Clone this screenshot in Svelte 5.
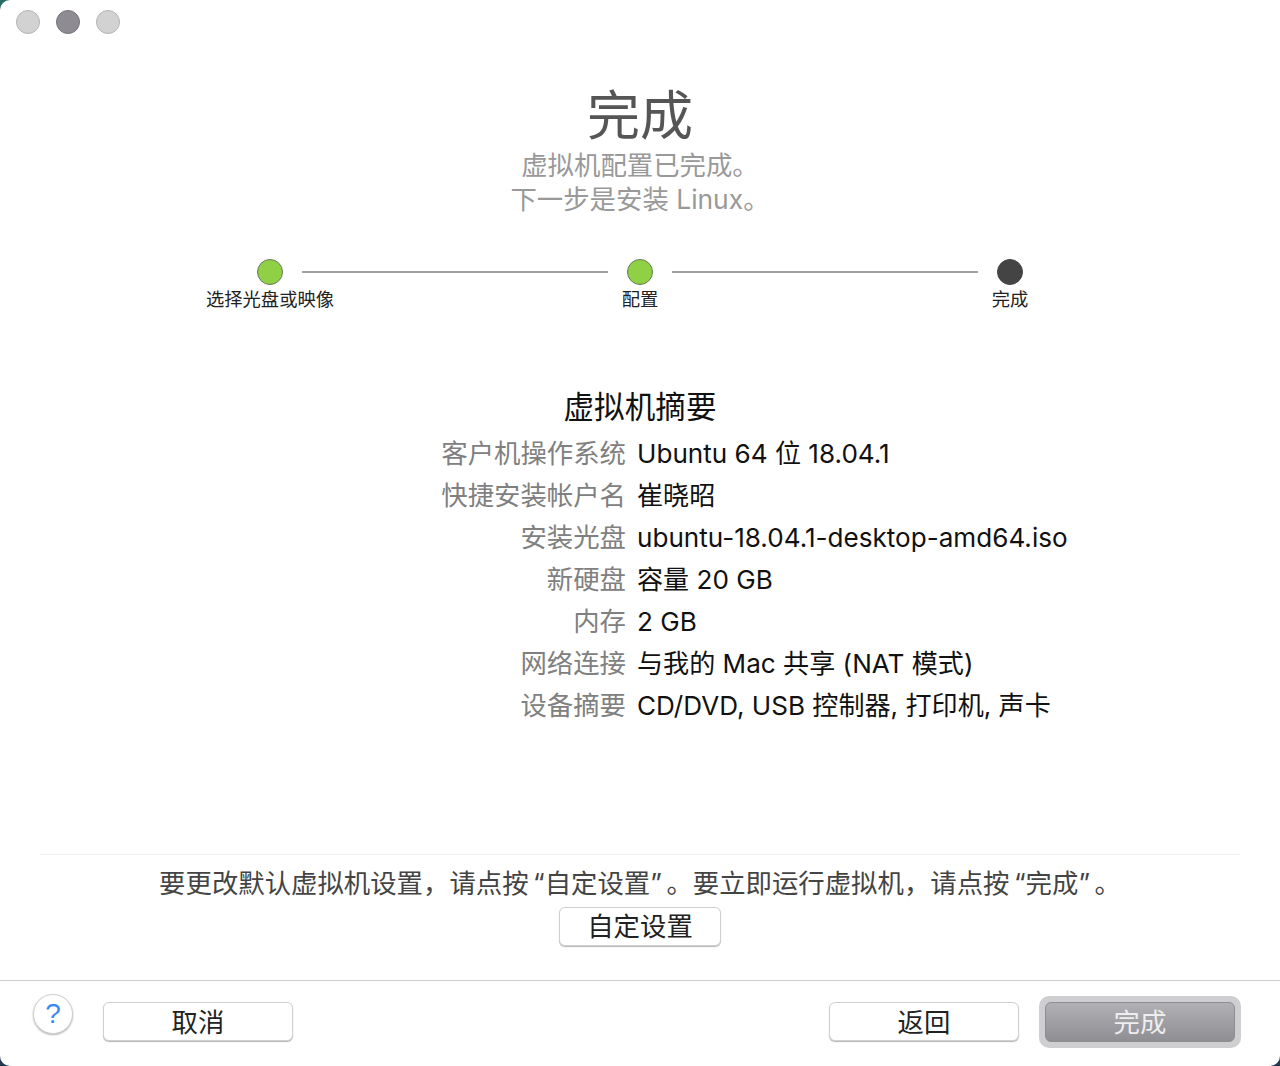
<script>
  const steps = [
    { label: '选择光盘或映像', done: true },
    { label: '配置', done: true },
    { label: '完成', done: false }
  ];
  const rows = [
    ['客户机操作系统', 'Ubuntu 64 位 18.04.1'],
    ['快捷安装帐户名', '崔晓昭'],
    ['安装光盘', 'ubuntu-18.04.1-desktop-amd64.iso'],
    ['新硬盘', '容量 20 GB'],
    ['内存', '2 GB'],
    ['网络连接', '与我的 Mac 共享 (NAT 模式)'],
    ['设备摘要', 'CD/DVD, USB 控制器, 打印机, 声卡']
  ];
</script>

<div class="window">
  <div class="lights">
    <span class="light"></span>
    <span class="light dark"></span>
    <span class="light"></span>
  </div>

  <header class="head">
    <h1>完成</h1>
    <p>虚拟机配置已完成。</p>
    <p>下一步是安装 Linux。</p>
  </header>

  <div class="steps">
    {#each steps as s, i}
      <div class="step">
        <span class="dot" class:done={s.done}></span>
        <span class="step-label">{s.label}</span>
      </div>
      {#if i < steps.length - 1}<span class="line"></span>{/if}
    {/each}
  </div>

  <section class="summary">
    <h2>虚拟机摘要</h2>
    <div class="grid">
      {#each rows as r}
        <div class="key">{r[0]}</div>
        <div class="val">{r[1]}</div>
      {/each}
    </div>
  </section>

  <div class="custom">
    <p>要更改默认虚拟机设置，请点按<span class="qo">“</span>自定设置<span class="qc">”</span>。要立即运行虚拟机，请点按<span class="qo">“</span>完成<span class="qc">”</span>。</p>
    <button class="btn small">自定设置</button>
  </div>

  <footer class="foot">
    <button class="help">?</button>
    <button class="btn wide">取消</button>
    <span class="spacer"></span>
    <button class="btn wide">返回</button>
    <div class="ring"><button class="primary">完成</button></div>
  </footer>

  <svg class="corner tl" width="10" height="10" viewBox="0 0 10 10"><path d="M0 0H10A10 10 0 0 0 0 10Z" fill="#2a6b62"/></svg>
  <svg class="corner bl" width="10" height="10" viewBox="0 0 10 10"><path d="M0 10H10A10 10 0 0 1 0 0Z" fill="#25394f"/></svg>
  <svg class="corner br" width="10" height="10" viewBox="0 0 10 10"><path d="M10 10H0A10 10 0 0 0 10 0Z" fill="#25394f"/></svg>
</div>

<style>
  :global(body) { margin: 0; background: #fff; }
  .window {
    position: relative;
    width: 1280px;
    height: 1066px;
    background: #fff;
    overflow: hidden;
    display: flex;
    flex-direction: column;
    font-family: "Inter", "Noto Sans CJK SC", sans-serif;
  }
  .lights { display: flex; gap: 16px; padding: 10px 0 0 16px; height: 24px; }
  .light {
    width: 24px; height: 24px; box-sizing: border-box; border-radius: 50%;
    background: #d2d2d2; border: 1px solid #b5b5b5;
  }
  .light.dark { background: #8e8c92; border-color: #76747a; }

  .head { text-align: center; margin-top: 51px; }
  h1 { margin: 0; font-size: 53px; line-height: 63px; font-weight: 400; color: #555; }
  .head p { margin: 0; font-size: 26.4px; line-height: 34px; color: #999; }

  .steps {
    display: flex; align-items: flex-start; justify-content: center;
    margin-top: 43px; height: 60px;
  }
  .step { width: 60px; display: flex; flex-direction: column; align-items: center; }
  .dot {
    width: 26px; height: 26px; box-sizing: border-box; border-radius: 50%;
    background: #444; border: 1px solid #444;
  }
  .dot.done { background: #8fd045; border-color: #6a7a5a; }
  .step-label { font-size: 18.3px; line-height: 28px; white-space: nowrap; color: #222; }
  .line { width: 306px; height: 2px; background: #a0a0a0; margin: 12px 2px 0; }

  .summary { margin-top: 67px; }
  h2 { margin: 0; text-align: center; font-size: 30.6px; line-height: 42px; font-weight: 400; color: #111; }
  .grid {
    display: grid; grid-template-columns: 626px 1fr; column-gap: 11px;
    grid-auto-rows: 42px; align-items: baseline; margin-top: 4px;
    font-size: 26px;
  }
  .key { text-align: right; color: #808080; white-space: nowrap; font-size: 26.4px; }
  .val { color: #111; white-space: nowrap; font-size: 26.1px; }

  .custom {
    margin: auto 40px 0; border-top: 1px solid #efefef; padding-top: 10px; text-align: center; height: 126px; box-sizing: border-box;
  }
  .custom p { margin: 0; font-size: 26.4px; line-height: 36px; color: #444; }
  .qo { margin-left: 4.5px; }
  .qc { margin-right: 4.5px; }

  .btn {
    box-sizing: border-box; background: #fff; border: 1px solid #d0d0d0; border-radius: 6px;
    box-shadow: 0 1px 1px #b5b5b5; font-family: inherit; color: #222; font-size: 26.4px; line-height: 1; padding: 0;
    height: 39px;
  }
  .small { width: 162px; margin-top: 6px; }
  .wide { width: 190px; padding-top: 1px; }

  .foot {
    border-top: 1px solid #ccc; height: 86px; box-sizing: border-box;
    display: flex; align-items: flex-start; padding: 21px 39px 0 33px;
  }
  .help {
    width: 40px; height: 40px; box-sizing: border-box; border-radius: 50%; padding: 0;
    background: #fff; border: 1px solid #d0d0d0; box-shadow: 0 1px 2px #b5b5b5;
    color: #3b88f5; font-size: 28px; font-family: "Liberation Sans", sans-serif; margin-top: -8px; margin-right: 30px;
  }
  .spacer { flex: 1; }
  .ring {
    margin: -6px 0 0 20px; padding: 6px; background: #cfced1; border-radius: 10px;
  }
  .primary {
    display: block; box-sizing: border-box; width: 190px; height: 40px; padding: 0;
    border: 1px solid #8e8d92; border-radius: 6px; font-family: inherit; font-size: 26.4px; line-height: 1;
    color: #eee; background: linear-gradient(#b1b0b5, #8f8e93);
  }
  .corner { position: absolute; }
  .tl { left: 0; top: 0; }
  .bl { left: 0; bottom: 0; }
  .br { right: 0; bottom: 0; }
</style>
